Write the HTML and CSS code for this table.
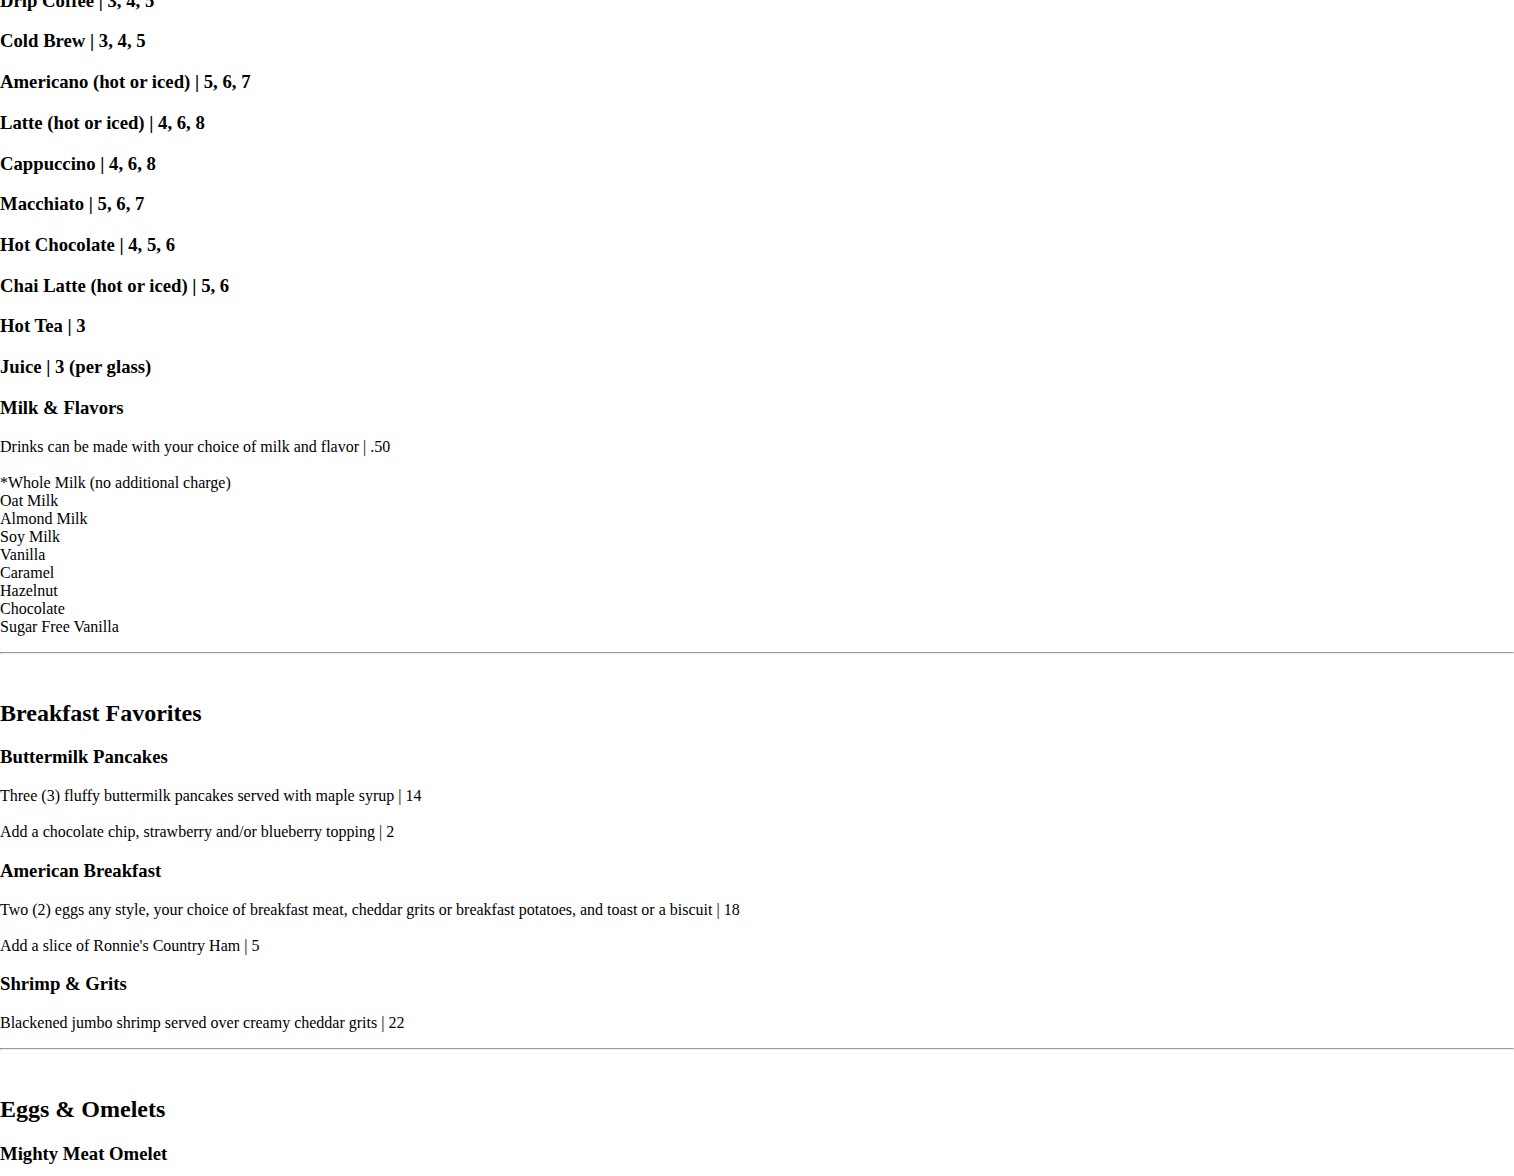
FILE: index.html
```html
<!DOCTYPE html>
<html lang="en">
<head>
  <meta charset="UTF-8">
  <meta name="viewport" content="width=device-width, initial-scale=1.0">
  <title>Menu</title>
  <link rel="stylesheet" href="styles.css">
</head>
<body>
  <main class="menu">
    <!-- Coffee & drinks -->
    <section class="menu-section drinks">
      <h3>Drip Coffee | 3, 4, 5</h3>
      <h3>Cold Brew | 3, 4, 5</h3>
      <h3>Americano (hot or iced) | 5, 6, 7</h3>
      <h3>Latte (hot or iced) | 4, 6, 8</h3>
      <h3>Cappuccino | 4, 6, 8</h3>
      <h3>Macchiato | 5, 6, 7</h3>
      <h3>Hot Chocolate | 4, 5, 6</h3>
      <h3>Chai Latte (hot or iced) | 5, 6</h3>
      <h3>Hot Tea | 3</h3>
      <h3>Juice | 3 (per glass)</h3>
      <h3>Milk &amp; Flavors</h3>
      <p>Drinks can be made with your choice of milk and flavor | .50</p>
      <p>*Whole Milk (no additional charge)<br>
        Oat Milk<br>
        Almond Milk<br>
        Soy Milk<br>
        Vanilla<br>
        Caramel<br>
        Hazelnut<br>
        Chocolate<br>
        Sugar Free Vanilla</p>
    </section>

    <hr>

    <section class="menu-section">
      <h2>Breakfast Favorites</h2>
      <h3>Buttermilk Pancakes</h3>
      <p>Three (3) fluffy buttermilk pancakes served with maple syrup | 14</p>
      <p>Add a chocolate chip, strawberry and/or blueberry topping | 2</p>
      <h3>American Breakfast</h3>
      <p>Two (2) eggs any style, your choice of breakfast meat, cheddar grits or breakfast potatoes, and toast or a biscuit | 18</p>
      <p>Add a slice of Ronnie's Country Ham | 5</p>
      <h3>Shrimp &amp; Grits</h3>
      <p>Blackened jumbo shrimp served over creamy cheddar grits | 22</p>
    </section>

    <hr>

    <section class="menu-section">
      <h2>Eggs &amp; Omelets</h2>
      <h3>Mighty Meat Omelet</h3>
    </section>
  </main>
</body>
</html>
```

FILE: styles.css
```css
body {
  margin: 0;
  font-family: "Liberation Serif", "Times New Roman", serif;
  color: #000;
  background: #fff;
}

.menu {
  margin-top: -29px;
}

.menu-section {
  padding-top: 18px;
}

.drinks {
  padding-top: 0;
}

p + p {
  margin-top: 18px;
}

hr {
  margin: 8px 0;
}
```
